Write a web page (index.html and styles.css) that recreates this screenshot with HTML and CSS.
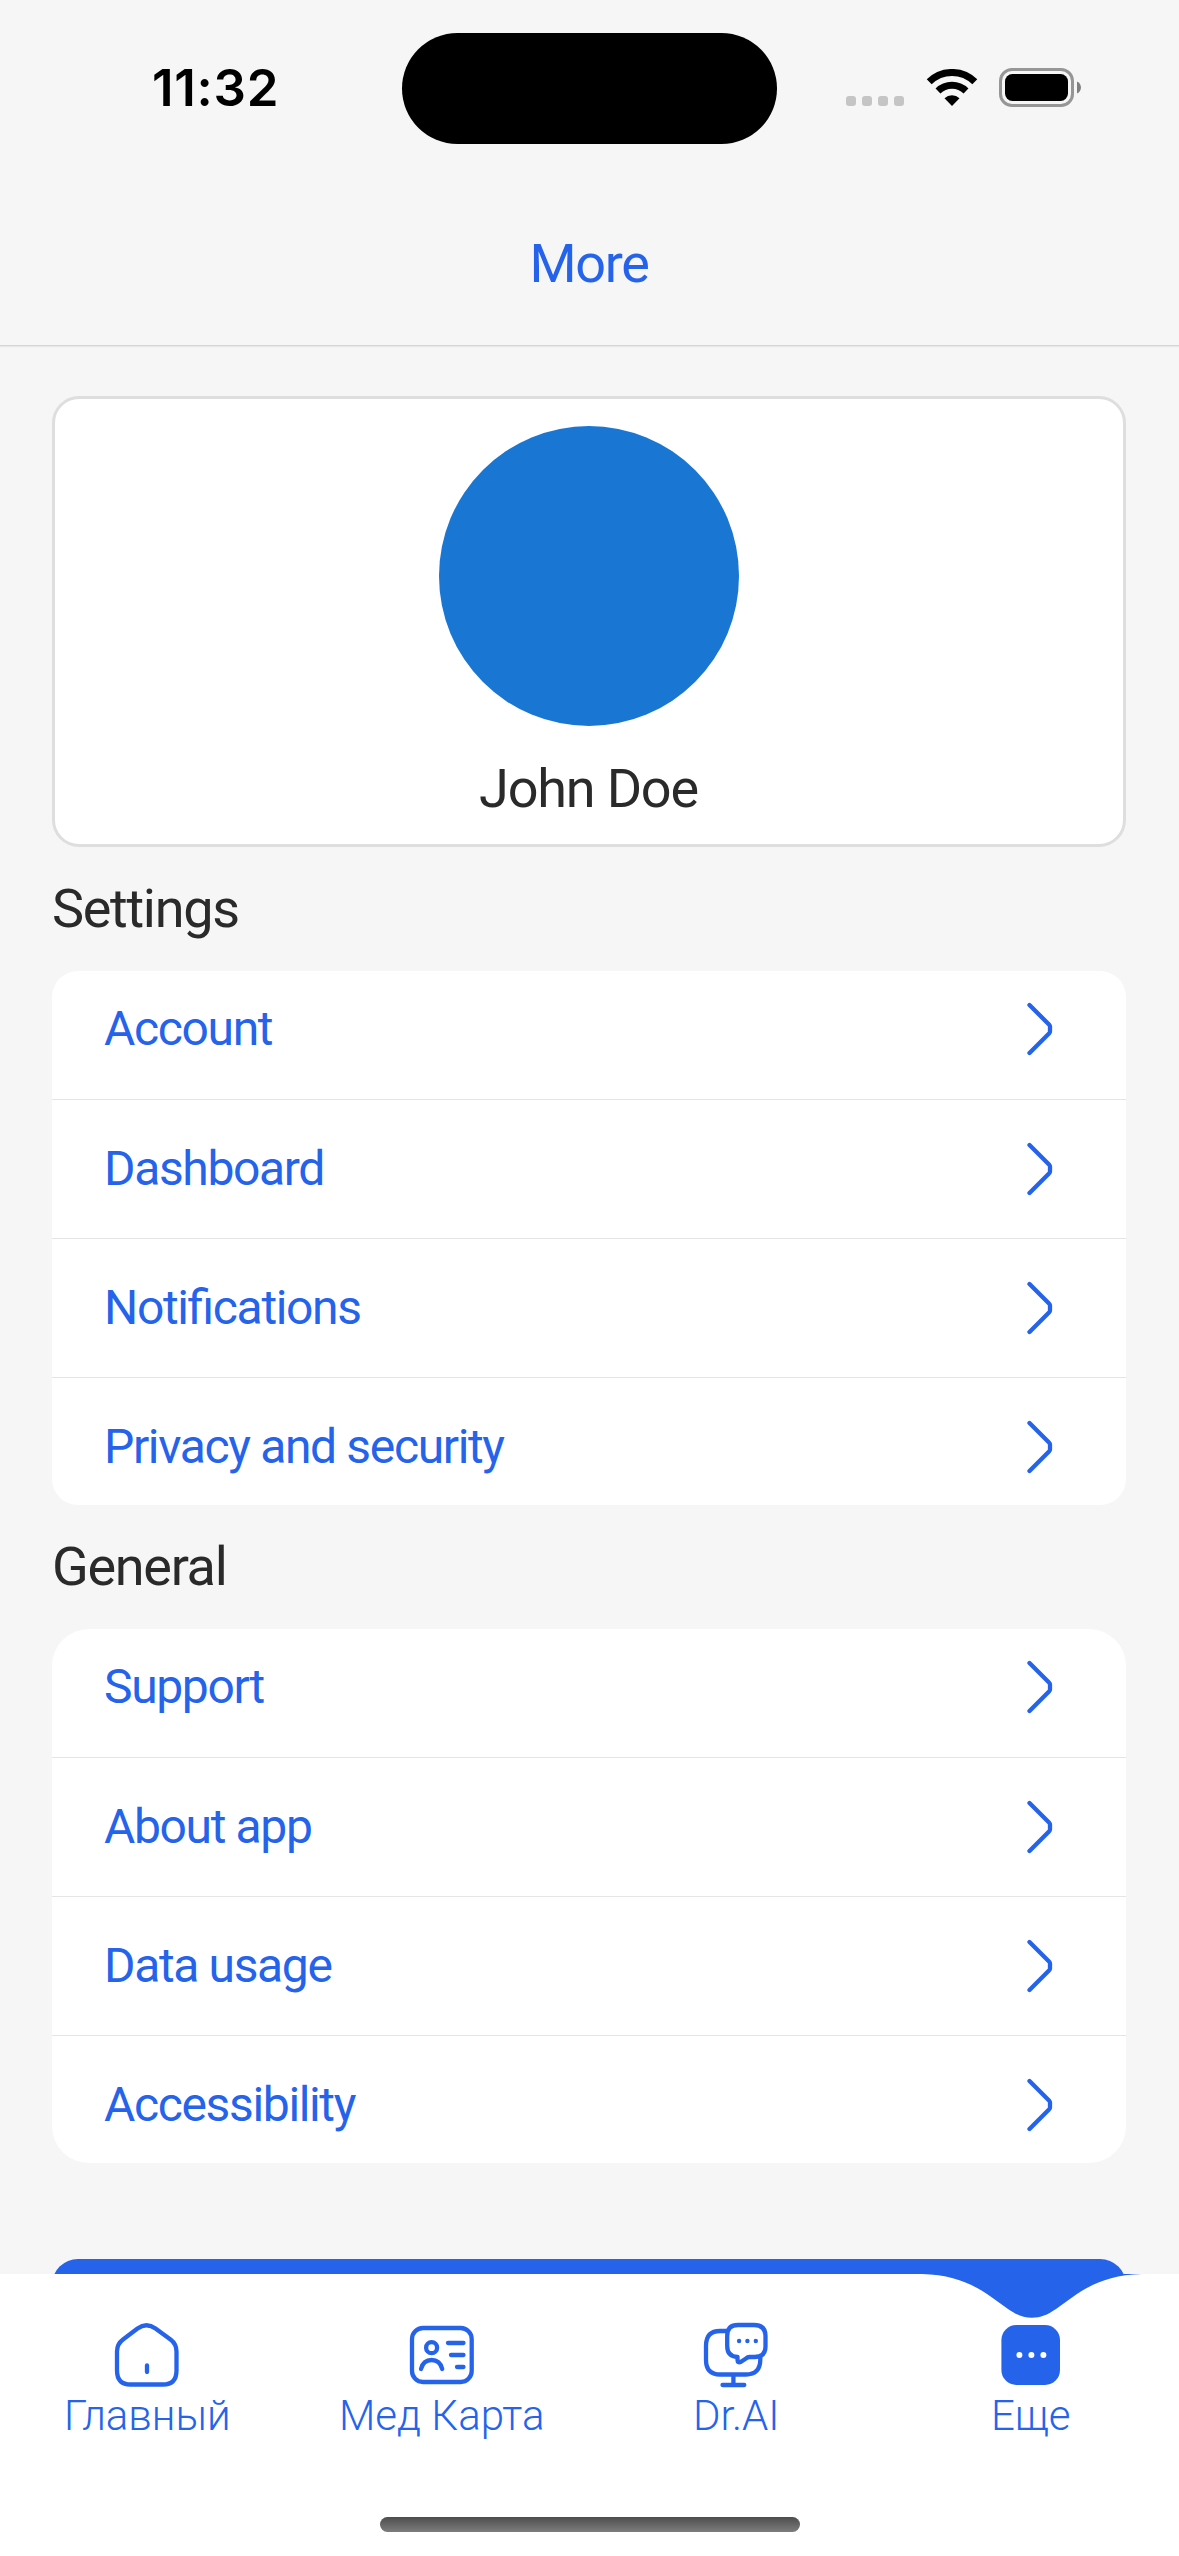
FILE: index.html
```html
<!DOCTYPE html>
<html lang="ru">
<head>
<meta charset="utf-8">
<title>More</title>
<link rel="stylesheet" href="styles.css">
</head>
<body>
<div class="screen">
  <header class="header">
    <div class="status">
      <div class="time">11:32</div>
      <div class="island"></div>
      <div class="indicators">
        <div class="signal"><i></i><i></i><i></i><i></i></div>
        <svg class="wifi" width="52" height="38" viewBox="0 0 52 38">
          <path d="M3.200 12.800A32.500 32.500 0 0 1 48.800 12.800" fill="none" stroke="#000" stroke-width="7"/>
          <path d="M12 22A20 20 0 0 1 40 22" fill="none" stroke="#000" stroke-width="7"/>
          <path d="M18.500 29.200A11 11 0 0 1 33.500 29.200L26 37Z"/>
        </svg>
        <svg class="battery" width="82" height="39" viewBox="0 0 82 39">
          <rect x="1.500" y="1.500" width="72" height="36" rx="11.500" fill="none" stroke="#969696" stroke-width="3"/>
          <rect x="6" y="6" width="63" height="27" rx="7.500"/>
          <path d="M78 13.500C83.300 15.500 83.300 23.500 78 25.500Z" fill="#808080"/>
        </svg>
      </div>
    </div>
    <h1 class="title">More</h1>
  </header>
  <main class="content">
    <section class="profile">
      <div class="avatar"></div>
      <div class="name">John Doe</div>
    </section>
    <h2 class="section">Settings</h2>
    <ul class="list">
      <li><span>Account</span><svg class="chev" viewBox="0 0 26 54"><path d="M2.500 3L22 22.500Q23 23.500 23 24.500V29.500Q23 30.500 22 31.500L2.500 51"/></svg></li>
      <li><span>Dashboard</span><svg class="chev" viewBox="0 0 26 54"><path d="M2.500 3L22 22.500Q23 23.500 23 24.500V29.500Q23 30.500 22 31.500L2.500 51"/></svg></li>
      <li><span>Notifications</span><svg class="chev" viewBox="0 0 26 54"><path d="M2.500 3L22 22.500Q23 23.500 23 24.500V29.500Q23 30.500 22 31.500L2.500 51"/></svg></li>
      <li><span>Privacy and security</span><svg class="chev" viewBox="0 0 26 54"><path d="M2.500 3L22 22.500Q23 23.500 23 24.500V29.500Q23 30.500 22 31.500L2.500 51"/></svg></li>
    </ul>
    <h2 class="section">General</h2>
    <ul class="list list-round">
      <li><span>Support</span><svg class="chev" viewBox="0 0 26 54"><path d="M2.500 3L22 22.500Q23 23.500 23 24.500V29.500Q23 30.500 22 31.500L2.500 51"/></svg></li>
      <li><span>About app</span><svg class="chev" viewBox="0 0 26 54"><path d="M2.500 3L22 22.500Q23 23.500 23 24.500V29.500Q23 30.500 22 31.500L2.500 51"/></svg></li>
      <li><span>Data usage</span><svg class="chev" viewBox="0 0 26 54"><path d="M2.500 3L22 22.500Q23 23.500 23 24.500V29.500Q23 30.500 22 31.500L2.500 51"/></svg></li>
      <li><span>Accessibility</span><svg class="chev" viewBox="0 0 26 54"><path d="M2.500 3L22 22.500Q23 23.500 23 24.500V29.500Q23 30.500 22 31.500L2.500 51"/></svg></li>
    </ul>
    <div class="button"></div>
  </main>
  <nav class="tabs">
    <svg class="notch" width="220" height="45" viewBox="0 0 220 45"><path d="M0 0C32 1 51 10 70 23.500L86 35C95 41 101 43.700 110 43.700S125 41 134 35L150 23.500C169 10 188 1 220 0Z" fill="#2563eb"/></svg>
    <a class="tab">
      <svg class="icon" viewBox="0 0 72 72"><path d="M26.500 6.500Q35.500 0 44.500 6.500L59.500 17.500Q65.500 22 65.500 29.500V48.500Q65.500 62.500 52 62.500H19.500Q6 62.500 6 48.500V29.500Q6 22 12 17.500Z"/><path d="M36 43.500V50"/></svg>
      <span>Главный</span>
    </a>
    <a class="tab">
      <svg class="icon" viewBox="0 0 72 72"><rect x="6" y="6" width="59.700" height="54" rx="11"/><circle cx="25.600" cy="25.700" r="5.500"/><path d="M15 47C16.500 41 20 38 25.600 38S34.700 41 36.200 47M42 21H57.500M45 33H57.500M51 45H57.500"/></svg>
      <span>Мед Карта</span>
    </a>
    <a class="tab">
      <svg class="icon" viewBox="0 0 72 72"><path d="M27 9H20Q6 9 6 24V38Q6 52.500 20 52.500H46Q60 52.500 60.300 38V35M33.400 52.500V62.500M22.500 63H44.300"/><path d="M38 3H54Q65.500 3 65.500 14V24.500Q65.500 35 54.500 35H49.500Q47.500 35 46 36.500L41 39.800Q37.500 41.500 37.500 38V35Q27.200 34.500 27.200 24V14Q27.200 3 38 3Z"/><g class="dots"><circle cx="39.100" cy="19" r="2.200"/><circle cx="47.400" cy="19" r="2.200"/><circle cx="55.800" cy="19" r="2.200"/></g></svg>
      <span>Dr.AI</span>
    </a>
    <a class="tab">
      <svg class="icon" viewBox="0 0 72 72"><rect class="solid" x="6.400" y="3" width="58.600" height="60" rx="15"/><g class="holes"><circle cx="24.400" cy="33" r="3"/><circle cx="36.400" cy="33" r="3"/><circle cx="48.400" cy="33" r="3"/></g></svg>
      <span>Еще</span>
    </a>
    <div class="home-bar"></div>
  </nav>
</div>
</body>
</html>
```
FILE: styles.css
```css
* { box-sizing: border-box; margin: 0; padding: 0; }
body { background: #f6f6f6; font-family: Roboto, "Noto Sans", sans-serif; }
.screen { width: 1179px; height: 2556px; display: flex; flex-direction: column; overflow: hidden; background: #f6f6f6; }
.header { height: 346px; flex: none; border-bottom: 1px solid #d5d5d5; box-shadow: 0 1px 1px #e8e8e8; }
.status { height: 178px; display: grid; grid-template-columns: 402px 375px 402px; align-items: center; }
.time { font: 600 51px/60px Inter, sans-serif; letter-spacing: 0.700px; padding: 0 0 3px 152px; color: #000; }
.island { height: 111px; border-radius: 56px; background: #000; margin-bottom: 0.400px; }
.indicators { display: flex; align-items: flex-end; padding-left: 64px; height: 39px; margin-bottom: 3px; }
.signal { display: flex; gap: 6px; margin: 0 22px 0 5px; }
.signal i { width: 10px; height: 10px; border-radius: 3px; background: #c5c5c5; margin-bottom: 1px; }
.wifi { margin-right: 21px; }
.title { font-size: 54px; font-weight: 400; line-height: 64px; letter-spacing: -1.300px; text-align: center; color: #2563eb; margin: 54px 1px 0 0; }
.content { flex: none; height: 1928px; padding: 50px 53px 0 52px; overflow: hidden; }
.profile { height: 451px; border: 3px solid #dedede; border-radius: 27px; background: #fff; display: flex; flex-direction: column; align-items: center; padding-top: 27px; }
.avatar { width: 300px; height: 300px; border-radius: 50%; background: #1976d2; flex: none; }
.name { font-size: 54px; line-height: 64px; letter-spacing: -1.200px; color: #2a2a2a; margin: 31px 1px 0 0; }
.section { font-size: 54px; font-weight: 400; line-height: 64px; letter-spacing: -1.300px; color: #2a2a2a; height: 124px; padding-top: 30px; }
.list { height: 534px; list-style: none; border-radius: 26px; background: #fff; overflow: hidden; display: flex; flex-direction: column; justify-content: center; }
.list-round { border-radius: 37px; }
.list li { height: 139.200px; flex: none; display: flex; align-items: center; justify-content: space-between; padding: 0 73.500px 0 52px; font-size: 48px; line-height: 56px; letter-spacing: -1.350px; font-feature-settings: "liga" 1; color: #2563eb; }
.list li + li { border-top: 1.500px solid #e5e5e5; }
.chev { width: 26px; height: 54px; fill: none; stroke: #2563eb; stroke-width: 4.300; stroke-linecap: round; stroke-linejoin: round; }
.button { margin-top: 96px; height: 150px; border-radius: 26px; background: #2563eb; }
.tabs { position: relative; flex: 1; display: flex; background: #fff; padding: 48px 1px 0 0; }
.notch { position: absolute; left: 922px; top: 0; }
.tab { flex: 1; display: flex; flex-direction: column; align-items: center; color: #2563eb; font-size: 42px; font-weight: 300; line-height: 44px; }
.icon { width: 72px; height: 72px; fill: none; stroke: #2563eb; stroke-width: 4.300; stroke-linecap: round; stroke-linejoin: round; }
.icon .dots, .icon .solid { fill: #2563eb; stroke: none; }
.icon .holes { fill: #fff; stroke: none; }
.home-bar { position: absolute; left: 380px; top: 243px; width: 420px; height: 15px; border-radius: 8px; background: linear-gradient(#4d4d4d, #7d7d7d); }
```
